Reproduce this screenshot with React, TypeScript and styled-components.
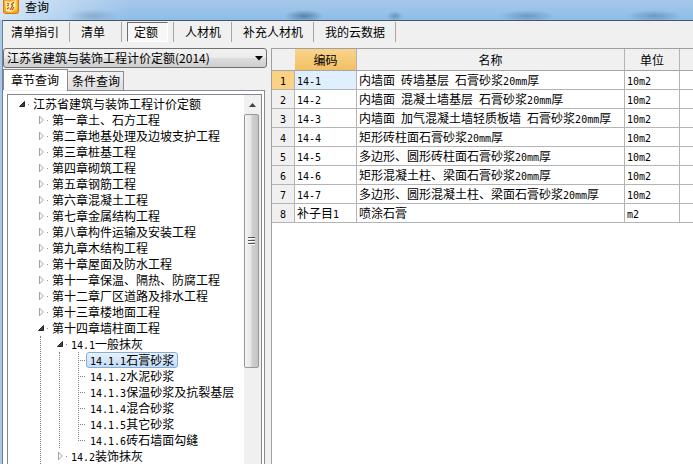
import { useState } from "react";
import styled, { createGlobalStyle } from "styled-components";

const GlobalStyle = createGlobalStyle`
  * { box-sizing: border-box; }
  body {
    margin: 0;
    overflow: hidden;
    color: #000;
    font: 12px/16px "Noto Sans CJK SC", sans-serif;
  }
  button, select, table { font: inherit; color: inherit; }
  button { margin: 0; padding: 0; border: 0; background: none; cursor: default; white-space: nowrap; }
  ul { list-style: none; margin: 0; padding: 0; }
`;

const Window = styled.div`
  display: flex;
  flex-direction: column;
  height: 100vh;
  overflow: hidden;
  background: linear-gradient(to right, #a9cbe9, #8fbbe3);
`;

const TitleBar = styled.header`
  display: flex;
  align-items: flex-start;
  gap: 6px;
  flex: none;
  height: 20px;
  padding-left: 3px;
  background:
    radial-gradient(ellipse 26px 7px at 93px 16px, #5f7f9d66, transparent),
    radial-gradient(ellipse 20px 6px at 304px 16px, #3f6488aa, transparent),
    radial-gradient(ellipse 8px 5px at 395px 16px, #4f789f99, transparent),
    radial-gradient(ellipse 28px 6px at 527px 16px, #4f789f88, transparent),
    radial-gradient(ellipse 28px 6px at 654px 16px, #4f789f88, transparent),
    linear-gradient(to right, #ffffff99, transparent 130px),
    linear-gradient(#a6c8ea, #8dbde8);
`;

const Title = styled.h1`
  margin: 0;
  font-size: 12px;
  font-weight: 400;
  line-height: 14px;
`;

const Client = styled.div`
  display: flex;
  flex-direction: column;
  flex: 1;
  min-height: 0;
  margin-left: 2px;
  border-top: 1px solid #41586c;
  border-left: 1px solid #6d7f90;
  background: #f0f0f0;
`;

const Toolbar = styled.nav`
  display: flex;
  flex: none;
  height: 27px;
  padding-top: 1px;
`;

const ToolItem = styled.div<{ $left: number; $right: number }>`
  height: 20px;
  padding: 0 ${(p) => p.$right}px 0 ${(p) => p.$left}px;
  border-right: 1px solid #a5a5a5;
`;

const ToolButton = styled.button<{ $active: boolean }>`
  height: 20px;
  padding: 0 9px 0 6px;
  border: 1px solid;
  border-color: ${(p) => (p.$active ? "#6e6e6e #fff #fff #6e6e6e" : "transparent")};
  background: ${(p) => (p.$active ? "#f7f7f7" : "transparent")};
  line-height: 18px;
`;

const Body = styled.main`
  display: flex;
  flex: 1;
  min-height: 0;
`;

const Side = styled.aside`
  display: flex;
  flex-direction: column;
  flex: none;
  width: 264px;
`;

const Combo = styled.div`
  display: grid;
  align-items: center;
  height: 20px;
  > * { grid-area: 1 / 1; }
  > svg { justify-self: end; margin-right: 4px; pointer-events: none; }
`;

const ComboSelect = styled.select`
  appearance: none;
  width: 100%;
  height: 20px;
  padding: 0 20px 0 3px;
  border: 1px solid #707070;
  border-radius: 3px;
  background: linear-gradient(#f2f2f2, #ebebeb 50%, #dddddd 50%, #cfcfcf);
`;

const Tabs = styled.div`
  display: flex;
  align-items: flex-end;
  flex: none;
  height: 22px;
`;

const Tab = styled.button<{ $active: boolean }>`
  height: ${(p) => (p.$active ? 21 : 19)}px;
  padding: 0 ${(p) => (p.$active ? 8 : 3)}px 0 ${(p) => (p.$active ? 7 : 3)}px;
  border: 1px solid #8b8b94;
  border-bottom: 0;
  border-left-color: ${(p) => (p.$active ? "#8b8b94" : "transparent")};
  background: ${(p) => (p.$active ? "#fff" : "linear-gradient(#f2f2f2, #dcdcdc)")};
`;

const TabEdge = styled.div`
  flex: none;
  height: 1px;
  margin: 0 2px 0 64px;
  background: #8b8b94;
`;

const TabPanel = styled.div`
  display: flex;
  flex: 1;
  min-height: 0;
  margin-right: 2px;
  padding: 3px 2px 0 4px;
  border-right: 1px solid #8b8b94;
  background: #fff;
`;

const TreeBox = styled.div`
  display: flex;
  flex: 1;
  min-width: 0;
  border: 1px solid #828790;
  border-bottom: 0;
`;

const TreeView = styled.div`
  flex: 1;
  min-width: 0;
  overflow: hidden;
  padding: 1px 0 0 10px;
`;

const Branch = styled.ul<{ $guide: boolean }>`
  margin-left: ${(p) => (p.$guide ? 3 : 4)}px;
  padding-left: 15px;
  border-left: ${(p) => (p.$guide ? "1px dotted #808080" : "0")};
`;

const LeafBranch = styled(Branch)`
  padding-left: 18px;
`;

const Row = styled.div`
  display: flex;
  align-items: center;
  height: 16px;
`;

const Toggle = styled.button`
  display: flex;
  align-items: center;
  width: 8px;
  height: 16px;
`;

const Dot = styled.span`
  width: 3px;
  height: 1px;
  border-right: 1px solid #909090;
`;

/* Dotted elbow that joins a leaf to its siblings; the last one stops half way. */
const Elbow = styled.span<{ $last: boolean }>`
  width: 8px;
  height: 16px;
  background:
    repeating-linear-gradient(#808080 0 1px, transparent 1px 2px) 0 0 / 1px ${(p) => (p.$last ? "8px" : "16px")} no-repeat,
    repeating-linear-gradient(to right, #808080 0 1px, transparent 1px 2px) 0 8px / 8px 1px no-repeat;
`;

const NodeButton = styled.button<{ $selected: boolean }>`
  height: 16px;
  padding: 0 3px;
  border: 1px solid ${(p) => (p.$selected ? "#84acdd" : "transparent")};
  border-radius: 3px;
  background: ${(p) => (p.$selected ? "linear-gradient(#e6f1fc, #c3dcf7)" : "none")};
  line-height: 14px;
`;

const Scrollbar = styled.div`
  display: flex;
  flex-direction: column;
  flex: none;
  width: 17px;
  padding: 1px 1px 0 0;
  background: #f0f0f0;
`;

const ScrollUp = styled.button`
  display: grid;
  place-items: center;
  height: 18px;
`;

const Thumb = styled.div`
  display: grid;
  place-items: center;
  height: 254px;
  margin-right: 1px;
  border: 1px solid #979797;
  border-radius: 2px;
  background: linear-gradient(to right, #f5f5f5, #e6e6e6 45%, #cfcfcf 55%, #c4c4c4);
`;

const Results = styled.section`
  flex: 1;
  min-width: 0;
  margin-left: 4px;
  border-top: 1px solid #a0a0a0;
  border-left: 1px solid #a0a0a0;
  background: #fff;
`;

const Grid = styled.table`
  width: 100%;
  table-layout: fixed;
  border-collapse: separate;
  border-spacing: 0;
`;

const Col = styled.col<{ $width?: number }>`
  width: ${(p) => (p.$width ? `${p.$width}px` : "auto")};
`;

const HeadCell = styled.th<{ $active?: boolean; $end?: boolean }>`
  height: 22px;
  padding: 0;
  border-right: ${(p) => (p.$end ? "0" : "1px solid #b4b4b4")};
  border-bottom: 1px solid #a6a6a6;
  background: ${(p) => (p.$active ? "linear-gradient(#f8d48c, #f2c063)" : "#f0f0f0")};
  font-weight: 400;
`;

const CornerCell = styled.td`
  padding: 0;
  border-bottom: 1px solid #a6a6a6;
  background: #f0f0f0;
`;

const NumberCell = styled.th<{ $active: boolean }>`
  height: 19px;
  padding: 0;
  border-right: 1px solid #b4b4b4;
  border-bottom: 1px solid #b4b4b4;
  background: ${(p) => (p.$active ? "#fbd284" : "#f0f0f0")};
  font-weight: 400;
`;

const Cell = styled.td<{ $active?: boolean; $end?: boolean }>`
  height: 19px;
  padding: 0 2px;
  border-right: ${(p) => (p.$end ? "0" : "1px solid #b4b4b4")};
  border-bottom: 1px solid #b4b4b4;
  background: ${(p) => (p.$active ? "#e0effe" : "#fff")};
  white-space: nowrap;
`;

const Mono = styled.span`
  font-family: "DejaVu Sans Mono", monospace;
  font-size: 10px;
  line-height: 1;
  white-space: pre;
`;

/* Latin runs are set at half the width of a Han character. */
function Text({ children }: { children: string }) {
  return (
    <>
      {children
        .split(/([\x20-\x7e]+)/)
        .filter(Boolean)
        .map((part, i) => (/^[\x20-\x7e]/.test(part) ? <Mono key={i}>{part}</Mono> : part))}
    </>
  );
}

type Item = { label: string; open?: boolean; children?: Item[]; leaves?: string[] };

const tree: Item = {
  label: "江苏省建筑与装饰工程计价定额",
  open: true,
  children: [
    { label: "第一章土、石方工程" },
    { label: "第二章地基处理及边坡支护工程" },
    { label: "第三章桩基工程" },
    { label: "第四章砌筑工程" },
    { label: "第五章钢筋工程" },
    { label: "第六章混凝土工程" },
    { label: "第七章金属结构工程" },
    { label: "第八章构件运输及安装工程" },
    { label: "第九章木结构工程" },
    { label: "第十章屋面及防水工程" },
    { label: "第十一章保温、隔热、防腐工程" },
    { label: "第十二章厂区道路及排水工程" },
    { label: "第十三章楼地面工程" },
    {
      label: "第十四章墙柱面工程",
      open: true,
      children: [
        {
          label: "14.1一般抹灰",
          open: true,
          leaves: [
            "14.1.1石膏砂浆",
            "14.1.2水泥砂浆",
            "14.1.3保温砂浆及抗裂基层",
            "14.1.4混合砂浆",
            "14.1.5其它砂浆",
            "14.1.6砖石墙面勾缝",
          ],
        },
        { label: "14.2装饰抹灰" },
      ],
    },
  ],
};

const tools = [
  { label: "清单指引", left: 1, right: 0 },
  { label: "清单", left: 4, right: 6 },
  { label: "定额", left: 5, right: 5 },
  { label: "人材机", left: 4, right: 0 },
  { label: "补充人材机", left: 4, right: 0 },
  { label: "我的云数据", left: 4, right: 0 },
];

const rows = [
  ["14-1", "内墙面 砖墙基层 石膏砂浆20mm厚", "10m2"],
  ["14-2", "内墙面 混凝土墙基层 石膏砂浆20mm厚", "10m2"],
  ["14-3", "内墙面 加气混凝土墙轻质板墙 石膏砂浆20mm厚", "10m2"],
  ["14-4", "矩形砖柱面石膏砂浆20mm厚", "10m2"],
  ["14-5", "多边形、圆形砖柱面石膏砂浆20mm厚", "10m2"],
  ["14-6", "矩形混凝土柱、梁面石膏砂浆20mm厚", "10m2"],
  ["14-7", "多边形、圆形混凝土柱、梁面石膏砂浆20mm厚", "10m2"],
  ["补子目1", "喷涂石膏", "m2"],
];

function Arrow({ open }: { open: boolean }) {
  return open ? (
    <svg width="8" height="8" viewBox="0 0 8 8" aria-hidden="true">
      <path d="M6.5 1.5v5h-5z" fill="#404040" stroke="#262626" />
    </svg>
  ) : (
    <svg width="8" height="10" viewBox="0 0 8 10" aria-hidden="true">
      <path d="M2.5 1.2v7.6L6.3 5z" fill="#fff" stroke="#a2a2a2" />
    </svg>
  );
}

type TreeProps = { node: Item; depth: number; selected: string; onSelect: (label: string) => void };

function TreeNode({ node, depth, selected, onSelect }: TreeProps) {
  const [open, setOpen] = useState(!!node.open);
  const leaves = node.leaves ?? [];
  return (
    <li>
      <Row>
        <Toggle aria-label={node.label} aria-expanded={open} onClick={() => setOpen(!open)}>
          <Arrow open={open} />
        </Toggle>
        <Dot />
        <NodeButton $selected={selected === node.label} onClick={() => onSelect(node.label)}>
          <Text>{node.label}</Text>
        </NodeButton>
      </Row>
      {open && node.children && (
        <Branch $guide={depth > 0}>
          {node.children.map((child) => (
            <TreeNode key={child.label} node={child} depth={depth + 1} selected={selected} onSelect={onSelect} />
          ))}
        </Branch>
      )}
      {open && leaves.length > 0 && (
        <LeafBranch $guide>
          {leaves.map((label, i) => (
            <li key={label}>
              <Row>
                <Elbow $last={i === leaves.length - 1} />
                <NodeButton $selected={selected === label} onClick={() => onSelect(label)}>
                  <Text>{label}</Text>
                </NodeButton>
              </Row>
            </li>
          ))}
        </LeafBranch>
      )}
    </li>
  );
}

function AppIcon() {
  return (
    <svg width="16" height="14" viewBox="0 0 16 14" aria-hidden="true">
      <path d="M0 0h16v11a3 3 0 0 1-3 3H3a3 3 0 0 1-3-3z" fill="#d9780f" />
      <path d="M1 0h14v11a2 2 0 0 1-2 2H3a2 2 0 0 1-2-2z" fill="#f7a71f" />
      <path d="M2 1l5 1 6-2v9l-5 3-5-1z" fill="#fff3bd" />
      <path d="M13 0v9l-5 3" fill="none" stroke="#ffd24a" strokeWidth="1.5" />
      <path d="M4 3l2 1M4 6l2-1M4 9l2-1.500M11 2L8 5M10 5L7 10M11 7l-2 3" fill="none" stroke="#b4570c" strokeWidth="1.3" />
    </svg>
  );
}

export default function App() {
  const [tool, setTool] = useState("定额");
  const [tab, setTab] = useState("章节查询");
  const [selected, setSelected] = useState("14.1.1石膏砂浆");

  return (
    <>
      <GlobalStyle />
      <Window>
        <TitleBar>
          <AppIcon />
          <Title>查询</Title>
        </TitleBar>
        <Client>
          <Toolbar>
            {tools.map((t) => (
              <ToolItem key={t.label} $left={t.left} $right={t.right}>
                <ToolButton $active={tool === t.label} onClick={() => setTool(t.label)}>
                  {t.label}
                </ToolButton>
              </ToolItem>
            ))}
          </Toolbar>
          <Body>
            <Side>
              <Combo>
                <ComboSelect aria-label="定额库" defaultValue="2014">
                  <option value="2014">江苏省建筑与装饰工程计价定额(2014)</option>
                </ComboSelect>
                <svg width="8" height="5" viewBox="0 0 8 5" aria-hidden="true">
                  <path d="M0 0h8L4 4.5z" fill="#000" />
                </svg>
              </Combo>
              <Tabs role="tablist">
                {["章节查询", "条件查询"].map((t) => (
                  <Tab key={t} role="tab" aria-selected={tab === t} $active={tab === t} onClick={() => setTab(t)}>
                    {t}
                  </Tab>
                ))}
              </Tabs>
              <TabEdge />
              <TabPanel role="tabpanel">
                <TreeBox>
                  <TreeView>
                    <ul>
                      <TreeNode node={tree} depth={0} selected={selected} onSelect={setSelected} />
                    </ul>
                  </TreeView>
                  <Scrollbar>
                    <ScrollUp aria-label="向上滚动">
                      <svg width="7" height="4" viewBox="0 0 7 4" aria-hidden="true">
                        <path d="M0 4h7L3.5 0z" fill="#404040" />
                      </svg>
                    </ScrollUp>
                    <Thumb>
                      <svg width="8" height="8" viewBox="0 0 8 8" aria-hidden="true">
                        <path d="M0 .5h7M0 3.5h7M0 6.5h7" stroke="#555" />
                        <path d="M0 1.5h7M0 4.5h7M0 7.5h7" stroke="#fff" />
                      </svg>
                    </Thumb>
                  </Scrollbar>
                </TreeBox>
              </TabPanel>
            </Side>
            <Results>
              <Grid>
                <colgroup>
                  <Col $width={23} />
                  <Col $width={62} />
                  <Col $width={268} />
                  <Col $width={55} />
                  <Col />
                </colgroup>
                <thead>
                  <tr>
                    <CornerCell />
                    <HeadCell $active>编码</HeadCell>
                    <HeadCell>名称</HeadCell>
                    <HeadCell>单位</HeadCell>
                    <HeadCell $end />
                  </tr>
                </thead>
                <tbody>
                  {rows.map(([code, name, unit], i) => (
                    <tr key={code}>
                      <NumberCell scope="row" $active={i === 0}>
                        <Text>{String(i + 1)}</Text>
                      </NumberCell>
                      <Cell $active={i === 0}><Text>{code}</Text></Cell>
                      <Cell><Text>{name}</Text></Cell>
                      <Cell><Text>{unit}</Text></Cell>
                      <Cell $end />
                    </tr>
                  ))}
                </tbody>
              </Grid>
            </Results>
          </Body>
        </Client>
      </Window>
    </>
  );
}
